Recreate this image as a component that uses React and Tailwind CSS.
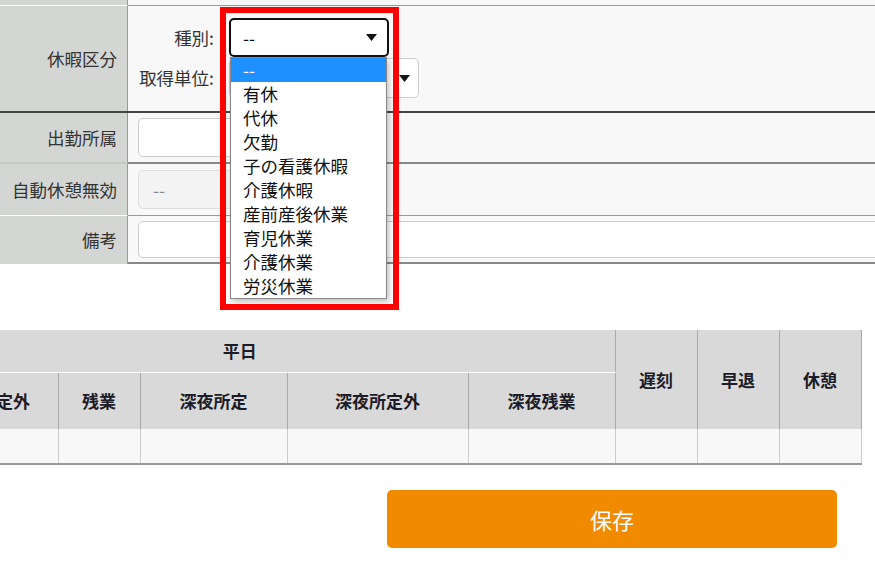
import React from 'react';

const OPTIONS = ['--', '有休', '代休', '欠勤', '子の看護休暇', '介護休暇', '産前産後休業', '育児休業', '介護休業', '労災休業'];

function Arrow() {
  return (
    <svg width="11" height="7" viewBox="0 0 11 7" className="shrink-0">
      <path d="M0 0 L11 0 L5.5 7 Z" fill="#111" />
    </svg>
  );
}

export default function App() {
  return (
    <div className="relative w-[875px] h-[564px] overflow-hidden bg-white text-[#333] font-['Noto_Sans_CJK_JP','Noto_Sans',sans-serif] text-[17.5px] leading-[24px]">
      {/* form */}
      <div className="flex h-[6px]">
        <div className="w-[128px] shrink-0 bg-[#d4d6d4] border-r border-[#999] border-b border-b-white" />
        <div className="flex-1 bg-[#f8f8f8] border-b border-[#999]" />
      </div>

      {/* 休暇区分 */}
      <div className="flex h-[107px] border-b-2 border-[#444]">
        <div className="w-[128px] shrink-0 bg-[#d4d6d4] border-r border-[#999] flex items-center justify-end pr-[10px]">
          休暇区分
        </div>
        <div className="flex-1 bg-[#f8f8f8] flex flex-col pt-[12px] pl-[10px]">
          <div className="flex items-center h-[39px]">
            <span className="w-[76px] text-right">種別:</span>
            <div className="ml-[15px] w-[160px] h-[39px] bg-white border-2 border-[#111] rounded-[5px] flex items-center justify-between pl-[12px] pr-[10px] text-[#111]">
              <span>--</span>
              <Arrow />
            </div>
          </div>
          <div className="flex items-center h-[40px] mt-[1px]">
            <span className="w-[76px] text-right">取得単位:</span>
            <div className="ml-[15px] w-[190px] h-[40px] bg-white border border-[#ccc] rounded-[5px] flex items-center justify-between pl-[12px] pr-[8px] text-[#111]">
              <span>--</span>
              <Arrow />
            </div>
          </div>
        </div>
      </div>

      {/* 出勤所属 */}
      <div className="flex h-[51px]">
        <div className="w-[128px] shrink-0 bg-[#d4d6d4] border-r border-[#999] border-b-2 border-b-[#c8c8c8] flex items-center justify-end pr-[10px]">
          出勤所属
        </div>
        <div className="flex-1 bg-[#f8f8f8] border-b-2 border-[#888] flex items-center pl-[10px]">
          <div className="w-[240px] h-[39px] bg-white border border-[#ccc] rounded-[5px]" />
        </div>
      </div>

      {/* 自動休憩無効 */}
      <div className="flex h-[52px]">
        <div className="w-[128px] shrink-0 bg-[#d4d6d4] border-r border-[#999] border-b border-b-white flex items-center justify-end pr-[10px]">
          自動休憩無効
        </div>
        <div className="flex-1 bg-[#f8f8f8] border-b border-[#999] flex items-center pl-[10px]">
          <div className="w-[240px] h-[39px] bg-[#f3f3f3] border border-[#ddd] rounded-[5px] flex items-center pl-[14px] text-[#888]">
            --
          </div>
        </div>
      </div>

      {/* 備考 */}
      <div className="flex h-[48px]">
        <div className="w-[128px] shrink-0 bg-[#d4d6d4] border-r border-[#999] flex items-center justify-end pr-[10px]">
          備考
        </div>
        <div className="flex-1 bg-[#f8f8f8] border-b-2 border-[#888] flex items-center pl-[10px]">
          <div className="w-[760px] shrink-0 h-[37px] bg-white border border-[#ccc] rounded-[5px]" />
        </div>
      </div>

      {/* table */}
      <div className="mt-[66px] w-[875px] overflow-hidden">
        <table className="ml-[-135px] w-[996px] table-fixed border-collapse text-[#1c1c28] font-bold text-[17px]">
          <colgroup>
            <col className="w-[86px]" />
            <col className="w-[107px]" />
            <col className="w-[82px]" />
            <col className="w-[147px]" />
            <col className="w-[181px]" />
            <col className="w-[147px]" />
            <col className="w-[82px]" />
            <col className="w-[82px]" />
            <col className="w-[82px]" />
          </colgroup>
          <thead>
            <tr className="h-[42px] bg-[#d9d9d9]">
              <th colSpan={6} className="border-r border-[#aaa] border-b border-b-white font-bold">平日</th>
              <th rowSpan={2} className="border-r border-[#aaa] font-bold">遅刻</th>
              <th rowSpan={2} className="border-r border-[#aaa] font-bold">早退</th>
              <th rowSpan={2} className="border-r border-[#aaa] font-bold">休憩</th>
            </tr>
            <tr className="h-[57px] bg-[#d9d9d9]">
              <th className="border-r border-[#aaa] font-bold">所定</th>
              <th className="border-r border-[#aaa] font-bold">所定外</th>
              <th className="border-r border-[#aaa] font-bold">残業</th>
              <th className="border-r border-[#aaa] font-bold">深夜所定</th>
              <th className="border-r border-[#aaa] font-bold">深夜所定外</th>
              <th className="border-r border-[#aaa] font-bold">深夜残業</th>
            </tr>
          </thead>
          <tbody>
            <tr className="h-[35px] bg-[#f8f8f8] border-b-2 border-[#999]">
              {Array.from({ length: 9 }).map((_, i) => (
                <td key={i} className="border-r border-[#ccc]" />
              ))}
            </tr>
          </tbody>
        </table>
      </div>

      <button className="mt-[25px] ml-[387px] w-[450px] h-[58px] rounded-[5px] bg-[#f28a00] text-white text-[22px] flex items-center justify-center">
        保存
      </button>

      {/* open dropdown list */}
      <div className="absolute left-[230px] top-[57px] w-[157px] bg-white border border-[#888] shadow-[2px_3px_6px_rgba(0,0,0,0.25)] text-[#111]">
        {OPTIONS.map((o, i) => (
          <div
            key={o}
            className={i === 0 ? 'h-[24px] leading-[24px] pl-[12px] bg-[#1e90ff] text-white' : 'h-[24px] leading-[24px] pl-[12px]'}
          >
            {o}
          </div>
        ))}
      </div>

      {/* annotation box */}
      <div className="absolute left-[220px] top-[7px] w-[179px] h-[303px] border-[6px] border-[#ff0000]" />
    </div>
  );
}
